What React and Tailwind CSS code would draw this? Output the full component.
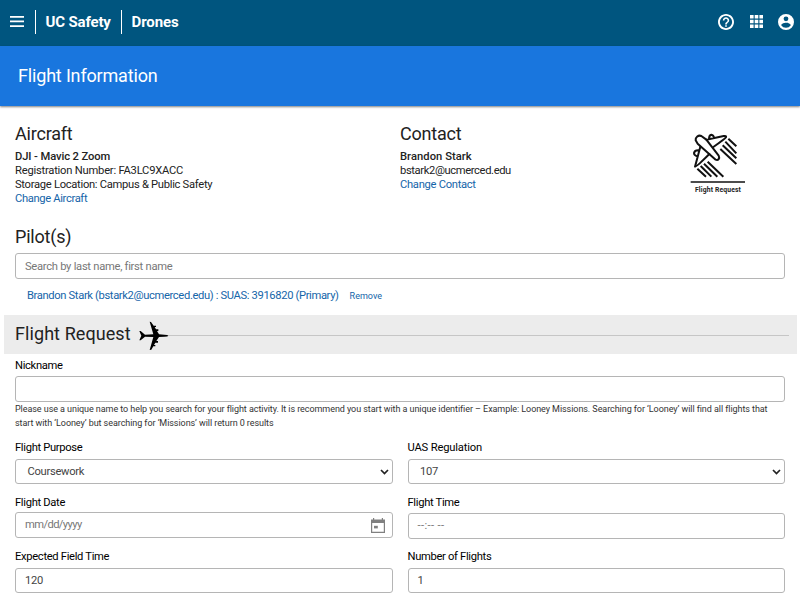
function Chevron() {
  return (
    <svg className="h-[6px] w-[9px] shrink-0" viewBox="0 0 9 6" fill="none" stroke="#222" strokeWidth="1.7">
      <path d="M1 1 4.5 4.5 8 1" />
    </svg>
  );
}

function CalendarIcon() {
  return (
    <svg className="h-[15px] w-[14px] shrink-0" viewBox="0 0 14 15" fill="#808080">
      <path d="M2 0h1.2v1.5h7.6V0H12v1.5h2V15H0V1.5h2zM1.2 5v8.8h11.6V5z" fillRule="evenodd" />
      <path d="M3 7.8h3.8v2.6H3z" />
    </svg>
  );
}

function Plane() {
  return (
    <svg className="h-[30px] w-[30px] shrink-0" viewBox="0 0 90 90" fill="#000">
      <path d="M89 44Q86 47 76 47L60 48 52 60 57 60 57 65 49 65 45 72 49 72 49 76 43 76 37 86 32 87 43 48 18 47 5 58 1 58 7 44 1 30 5 30 18 41 43 40 32 2 36 3 44 14 51 14 51 18 47 18 51 25 58 25 58 30 54 30 60 40 76 41Q86 41 89 44Z" />
    </svg>
  );
}

function Logo() {
  return (
    <div className="mt-[25px] ml-[290px] flex w-[56px] flex-col items-center">
      <svg className="h-[53px] w-[56px]" viewBox="60 48 168 159" fill="none" stroke="#111" strokeWidth="6" strokeLinecap="round" strokeLinejoin="round">
        <path d="M109 74 94 63C85 59 76 67 77 76L83 86 137 134C145 137 150 130 146 122Z" />
        <path d="M109 74 161 63Q170 62 168 67Q165 72 130 96M117 72Q117 60 124 59Q131 60 132 69M91 95 75 155Q78 157 118 117M87 106Q74 105 72 114Q72 121 82 124" />
        <path d="M175 71 199 94M166 80 199 115M158 91 199 130M151 102 199 147M82 161 108 185M92 153 124 185M102 146 142 185M113 140 160 185" strokeLinecap="butt" />
        <path d="M62 201H225" strokeWidth="4.5" strokeLinecap="butt" />
      </svg>
      <span className="mt-[2px] whitespace-nowrap text-[6.8px] leading-[8px] font-bold tracking-[0.14px]">Flight Request</span>
    </div>
  );
}

function Heading({ children, spacing = "tracking-[-0.2px]" }) {
  return <h2 className={`text-[18px] leading-[22px] text-[#222] ${spacing}`}>{children}</h2>;
}

function Field({
  label,
  value,
  select,
  icon,
  size = "h-[25px]",
  labelSize = "h-[17px]",
  labelSpacing = "tracking-[-0.32px]",
  valueStyle = "tracking-[-0.3px] text-[#444]",
}) {
  return (
    <div className="min-w-0 flex-1">
      <div className={`text-[11.2px] leading-[12px] text-black ${labelSpacing} ${labelSize}`}>{label}</div>
      <div
        className={`flex items-center justify-between rounded-[3px] border border-[#b5b5b5] text-[11.2px] leading-[12px] ${size} ${
          select ? "pr-[3px] pl-[11.5px]" : "pr-[7px] pl-[9px]"
        }`}
      >
        <span className={valueStyle}>{value}</span>
        {select && <Chevron />}
        {icon && <CalendarIcon />}
      </div>
    </div>
  );
}

export default function App() {
  return (
    <div className="h-[602px] w-[800px] overflow-hidden bg-white font-['Roboto',sans-serif] text-[#222]">
      <header className="flex h-[46px] items-center bg-[#00557f] pb-[3px] pl-[10px] text-white">
        <svg className="h-[11px] w-[14px]" viewBox="0 0 14 11" fill="#fff">
          <path d="M0 0h14v1.7H0zM0 4.6h14v1.7H0zM0 9.2h14v1.7H0z" />
        </svg>
        <div className="ml-[11px] h-[24px] w-px bg-white" />
        <span className="ml-[9.5px] w-[66px] whitespace-nowrap text-[15px] leading-[20px] font-bold tracking-[-0.15px]">UC Safety</span>
        <div className="ml-[9.5px] h-[24px] w-px bg-white" />
        <span className="ml-[9.5px] text-[15px] leading-[20px] font-bold tracking-[-0.1px]">Drones</span>
        <div className="mr-[6px] ml-auto flex items-center">
          <svg className="h-[16px] w-[16px]" viewBox="2 2 20 20" fill="#fff">
            <path d="M11 18h2v-2h-2v2zm1-16C6.480 2 2 6.480 2 12s4.480 10 10 10 10-4.480 10-10S17.520 2 12 2zm0 17.700a7.700 7.700 0 1 1 0-15.400 7.700 7.700 0 0 1 0 15.400zM12 6c-2.210 0-4 1.790-4 4h2c0-1.100.9-2 2-2s2 .9 2 2c0 2-3 1.750-3 5h2c0-2.250 3-2.500 3-5 0-2.210-1.790-4-4-4z" />
          </svg>
          <svg className="ml-[16px] h-[13px] w-[13px]" viewBox="0 0 13 13" fill="#fff">
            <path d="M0 0h3.6v3.6H0zM4.7 0h3.6v3.6H4.7zM9.4 0H13v3.6H9.4zM0 4.7h3.6v3.6H0zM4.7 4.7h3.6v3.6H4.7zM9.4 4.7H13v3.6H9.4zM0 9.4h3.6V13H0zM4.7 9.4h3.6V13H4.7zM9.4 9.4H13V13H9.4z" />
          </svg>
          <svg className="ml-[15px] h-[16px] w-[16px]" viewBox="2 2 20 20" fill="#fff">
            <path d="M12 2a10 10 0 1 0 0 20 10 10 0 0 0 0-20zm0 3a3 3 0 1 1 0 6 3 3 0 0 1 0-6zm0 14.2A7.2 7.2 0 0 1 6 16c0-2 4-3.1 6-3.1s6 1.1 6 3.1a7.2 7.2 0 0 1-6 3.2z" />
          </svg>
        </div>
      </header>
      <div className="flex h-[60px] items-center bg-[#1976de] pb-[2px] pl-[18px] text-[18px] tracking-[-0.17px] text-white shadow-[0_1px_2px_rgba(0,0,0,0.5)]">
        Flight Information
      </div>

      <main>
        <section className="flex h-[120px] pl-[15px] text-[11.2px] leading-[14px] tracking-[-0.29px]">
          <div className="w-[385px] pt-[17px]">
            <Heading>Aircraft</Heading>
            <div className="pt-[5px]">
              <p className="font-medium tracking-[-0.1px]">DJI - Mavic 2 Zoom</p>
              <p className="tracking-[-0.22px]">Registration Number: FA3LC9XACC</p>
              <p>Storage Location: Campus &amp; Public Safety</p>
              <p className="tracking-[-0.35px] text-[#1565a9]">Change Aircraft</p>
            </div>
          </div>
          <div className="w-0 pt-[17px] whitespace-nowrap">
            <Heading>Contact</Heading>
            <div className="pt-[5px]">
              <p className="font-medium tracking-[0.05px]">Brandon Stark</p>
              <p className="tracking-[-0.38px]">bstark2@ucmerced.edu</p>
              <p className="text-[#1565a9]">Change Contact</p>
            </div>
          </div>
          <Logo />
        </section>

        <section className="px-[15px]">
          <Heading>Pilot(s)</Heading>
          <div className="mt-[5px] flex h-[26px] items-center rounded-[3px] border border-[#b5b5b5] pt-[2px] pl-[9px] text-[11.2px] tracking-[-0.28px] text-[#777]">
            Search by last name, first name
          </div>
          <div className="flex h-[36px] items-center pb-[2px] pl-[12px] text-[11.2px] tracking-[-0.36px] text-[#1565a9]">
            <span>Brandon Stark (bstark2@ucmerced.edu) : SUAS: 3916820 (Primary)</span>
            <span className="ml-[11px] pt-px text-[9px] tracking-normal">Remove</span>
          </div>
        </section>

        <div className="mr-[3px] ml-[4px] flex h-[39px] items-center bg-[#ececec] pr-[8px] pb-px pl-[11px]">
          <Heading spacing="tracking-[0.08px]">Flight Request</Heading>
          <div className="ml-[8px] flex flex-1 items-center pt-[4px]">
            <Plane />
            <div className="mb-px h-px flex-1 bg-[#c6c6c6]" />
          </div>
        </div>

        <section className="px-[15px] pt-[6px]">
          <Field label="Nickname" size="h-[26px]" labelSize="h-[16px]" />
          <p className="h-[40px] text-[9px] leading-[14px] tracking-[-0.065px] text-[#333]">
            Please use a unique name to help you search for your flight activity. It is recommend you start with a unique identifier – Example: Looney Missions. Searching for ‘Looney’ will find all flights that
            <br />
            start with ‘Looney’ but searching for ‘Missions’ will return 0 results
          </p>
          <div className="flex h-[55px] gap-[15px]">
            <Field label="Flight Purpose" value="Coursework" select />
            <Field label="UAS Regulation" value="107" select labelSpacing="tracking-[-0.17px]" />
          </div>
          <div className="flex h-[54px] gap-[15px]">
            <Field
              label="Flight Date"
              value="mm/dd/yyyy"
              icon
              size="h-[26px]"
              labelSize="h-[15px]"
              valueStyle="tracking-[-0.6px] text-[#777]"
            />
            <Field
              label="Flight Time"
              value="--:-- --"
              size="h-[26px]"
              labelSize="h-[16px]"
              valueStyle="tracking-[0.35px] text-[#777]"
            />
          </div>
          <div className="flex gap-[15px]">
            <Field label="Expected Field Time" value="120" />
            <Field label="Number of Flights" value="1" />
          </div>
        </section>
      </main>
    </div>
  );
}
